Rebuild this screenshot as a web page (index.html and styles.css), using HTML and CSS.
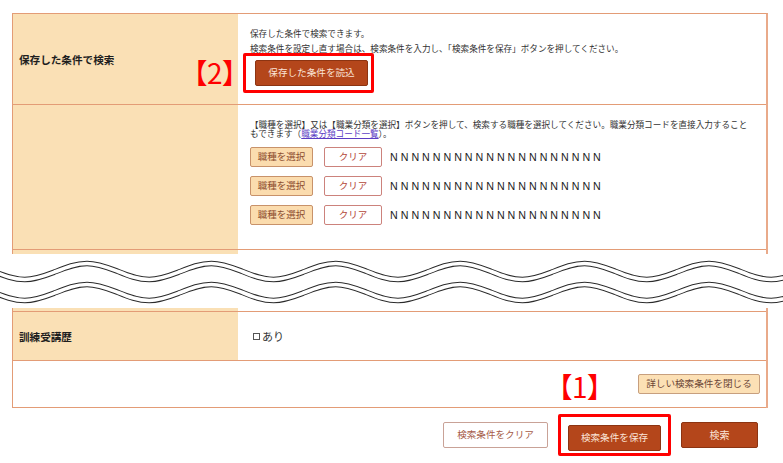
FILE: index.html
```html
<!DOCTYPE html>
<html lang="ja">
<head>
<meta charset="utf-8">
<title>検索条件</title>
<link rel="stylesheet" href="styles.css">
</head>
<body>
<div class="page">
  <div class="table table-top">
    <div class="row">
      <div class="label">保存した条件で検索</div>
      <div class="cell cell-saved">
        <p class="note">保存した条件で検索できます。</p>
        <p class="note note-2">検索条件を設定し直す場合は、検索条件を入力し、「検索条件を保存」ボタンを押してください。</p>
        <div class="anchor">
          <button class="btn btn-brown btn-load">保存した条件を読込</button>
          <span class="mark mark-2">【2】</span>
          <span class="hl hl-2"></span>
        </div>
      </div>
    </div>
    <div class="row">
      <div class="label"></div>
      <div class="cell cell-jobs">
        <p class="desc">【職種を選択】又は【職業分類を選択】ボタンを押して、検索する職種を選択してください。職業分類コードを直接入力すること<br>もできます（<a class="link" href="#">職業分類コード一覧</a>）。</p>
        <div class="job-list">
          <div class="job-row">
            <button class="btn btn-job">職種を選択</button>
            <button class="btn btn-clear">クリア</button>
            <span class="code">N N N N N N N N N N N N N N N N N N N N</span>
          </div>
          <div class="job-row">
            <button class="btn btn-job">職種を選択</button>
            <button class="btn btn-clear">クリア</button>
            <span class="code">N N N N N N N N N N N N N N N N N N N N</span>
          </div>
          <div class="job-row">
            <button class="btn btn-job">職種を選択</button>
            <button class="btn btn-clear">クリア</button>
            <span class="code">N N N N N N N N N N N N N N N N N N N N</span>
          </div>
        </div>
      </div>
    </div>
    <div class="row stub stub-open">
      <div class="label"></div>
      <div class="cell"></div>
    </div>
  </div>

  <div class="wave">
    <svg width="783" height="54" viewBox="0 0 783 54" aria-hidden="true">
      <defs>
        <path id="w" d="M-68.5,0 c10.14,-4.1 19.85,-8 31.1,-8 c11.25,0 20.96,4.1 31.1,8 c10.14,4.1 19.85,8 31.1,8 c11.25,0 20.96,-4.1 31.1,-8 c10.14,-4.1 19.85,-8 31.1,-8 c11.25,0 20.96,4.1 31.1,8 c10.14,4.1 19.85,8 31.1,8 c11.25,0 20.96,-4.1 31.1,-8 c10.14,-4.1 19.85,-8 31.1,-8 c11.25,0 20.96,4.1 31.1,8 c10.14,4.1 19.85,8 31.1,8 c11.25,0 20.96,-4.1 31.1,-8 c10.14,-4.1 19.85,-8 31.1,-8 c11.25,0 20.96,4.1 31.1,8 c10.14,4.1 19.85,8 31.1,8 c11.25,0 20.96,-4.1 31.1,-8 c10.14,-4.1 19.85,-8 31.1,-8 c11.25,0 20.96,4.1 31.1,8 c10.14,4.1 19.85,8 31.1,8 c11.25,0 20.96,-4.1 31.1,-8 c10.14,-4.1 19.85,-8 31.1,-8 c11.25,0 20.96,4.1 31.1,8 c10.14,4.1 19.85,8 31.1,8 c11.25,0 20.96,-4.1 31.1,-8 c10.14,-4.1 19.85,-8 31.1,-8 c11.25,0 20.96,4.1 31.1,8 c10.14,4.1 19.85,8 31.1,8 c11.25,0 20.96,-4.1 31.1,-8 c10.14,-4.1 19.85,-8 31.1,-8 c11.25,0 20.96,4.1 31.1,8 c10.14,4.1 19.85,8 31.1,8 c11.25,0 20.96,-4.1 31.1,-8"/>
      </defs>
      <g fill="none">
        <use href="#w" y="17.5" stroke="#2b2b2b" stroke-width="5.5"/>
        <use href="#w" y="17.5" stroke="#ffffff" stroke-width="3.5"/>
        <use href="#w" y="38.5" stroke="#2b2b2b" stroke-width="5.5"/>
        <use href="#w" y="38.5" stroke="#ffffff" stroke-width="3.5"/>
      </g>
    </svg>
  </div>

  <div class="table">
    <div class="row stub">
      <div class="label"></div>
      <div class="cell"></div>
    </div>
    <div class="row row-training">
      <div class="label">訓練受講歴</div>
      <div class="cell cell-check"><span class="chk"></span><span class="chk-text">あり</span></div>
    </div>
    <div class="row row-close">
      <button class="btn btn-close">詳しい検索条件を閉じる</button>
    </div>
  </div>

  <div class="actions">
    <button class="btn btn-outline">検索条件をクリア</button>
    <div class="anchor">
      <button class="btn btn-brown btn-save">検索条件を保存</button>
      <span class="mark mark-1">【1】</span>
      <span class="hl hl-1"></span>
    </div>
    <button class="btn btn-brown btn-search">検索</button>
  </div>
  <div class="rule"></div>
</div>
</body>
</html>
```

FILE: styles.css
```css
* { box-sizing: border-box; }
html, body { margin: 0; padding: 0; background: #fff; }
body {
  width: 783px;
  height: 463px;
  overflow: hidden;
  font-family: "Noto Sans CJK JP", "Noto Sans", sans-serif;
  color: #333;
}
p { margin: 0; }

.page { padding-top: 13px; }

.table {
  margin-left: 12px;
  width: 756px;
  border-left: 1px solid #e39c76;
  border-right: 2px solid #e9aa8a;
}
.table-top { border-top: 1px solid #e39c76; }

.row {
  display: flex;
  border-bottom: 1px solid #e39c76;
}
.label {
  width: 225px;
  flex: none;
  background: #fae0b5;
  padding-left: 6px;
  display: flex;
  align-items: center;
  font-size: 10.6px;
  font-weight: bold;
  color: #1e1e1e;
}
.cell {
  flex: 1;
  padding-left: 12px;
  padding-right: 12px;
  background: #fff;
}

.stub { height: 4px; }
.stub-open { border-bottom: none; }

/* row 1 */
.cell-saved { padding-top: 13px; padding-bottom: 18px; }
.note { font-size: 8.6px; line-height: 12px; white-space: nowrap; color: #333; }
.note-2 { margin-top: 3px; }

.anchor { position: relative; display: inline-block; vertical-align: top; }
.cell-saved .anchor { margin-top: 6px; margin-left: 5px; }

.btn {
  font-family: "Noto Sans CJK JP", sans-serif;
  margin: 0;
  padding: 0;
  border: 1px solid;
  border-radius: 2px;
  display: inline-flex;
  align-items: center;
  justify-content: center;
  line-height: 1;
  font-size: 9.5px;
  height: 20px;
}
.btn-brown {
  background: #b4461b;
  border-color: #8c3412;
  color: #fbe4d8;
  height: 26px;
  font-size: 9.6px;
}
.btn-load { width: 113px; display: flex; }

.mark {
  position: absolute;
  font-size: 28px;
  line-height: 28px;
  color: #ff0000;
  white-space: nowrap;
  font-feature-settings: "palt";
  pointer-events: none;
}
.mark-2 { left: -62px; top: -2px; }
.mark-1 { left: -10px; top: -50px; }

.hl {
  position: absolute;
  border: 3px solid #ff0000;
  border-radius: 2px;
  pointer-events: none;
}
.hl-2 { left: -12px; top: -7px; width: 131px; height: 40px; }
.hl-1 { left: -10px; top: -8px; width: 113px; height: 42px; }

/* row 2 */
.cell-jobs { padding-top: 15px; padding-bottom: 24px; }
.desc { font-size: 8.6px; line-height: 9px; white-space: nowrap; color: #333; }
.link { color: #5b3cc4; text-decoration: underline; }
.job-list {
  margin-top: 9px;
  display: flex;
  flex-direction: column;
  gap: 9px;
}
.job-row { display: flex; align-items: center; height: 20px; }
.btn-job {
  width: 63px;
  background: #fbdcae;
  border-color: #c8926a;
  color: #8d4e30;
}
.btn-clear {
  width: 58px;
  margin-left: 11px;
  background: #fff;
  border-color: #cc827c;
  color: #b4483a;
}
.code {
  margin-left: 8px;
  font-family: "Liberation Sans", Arial, sans-serif;
  font-size: 10.7px;
  color: #222;
  white-space: nowrap;
}

/* wave */
.wave { height: 54px; }
.wave svg { display: block; }

/* training row */
.row-training { height: 49px; }
.cell-check {
  display: flex;
  align-items: center;
  padding-left: 15px;
}
.chk {
  width: 7px;
  height: 7px;
  border: 1px solid #555;
  margin-top: 1px;
}
.chk-text { font-size: 11px; margin-left: 2px; color: #333; }

/* close row */
.row-close {
  height: 47px;
  justify-content: flex-end;
  align-items: center;
  padding-right: 6px;
}
.btn-close {
  width: 122px;
  background: #fce0b5;
  border-color: #c79f7e;
  color: #6b4535;
  font-size: 9.6px;
}

/* action bar */
.actions {
  margin-left: 12px;
  width: 756px;
  margin-top: 14px;
  padding-right: 10px;
  display: flex;
  justify-content: flex-end;
  gap: 20px;
}
.btn-outline {
  width: 105px;
  height: 26px;
  background: #fff;
  border-color: #c9a297;
  color: #a55b48;
  font-size: 9.6px;
}
.btn-save { width: 93px; }
.btn-search { width: 77px; font-size: 10px; }

.rule {
  margin-left: 12px;
  margin-top: 13px;
  width: 756px;
  border-top: 1px solid #e4e4e4;
}
```
